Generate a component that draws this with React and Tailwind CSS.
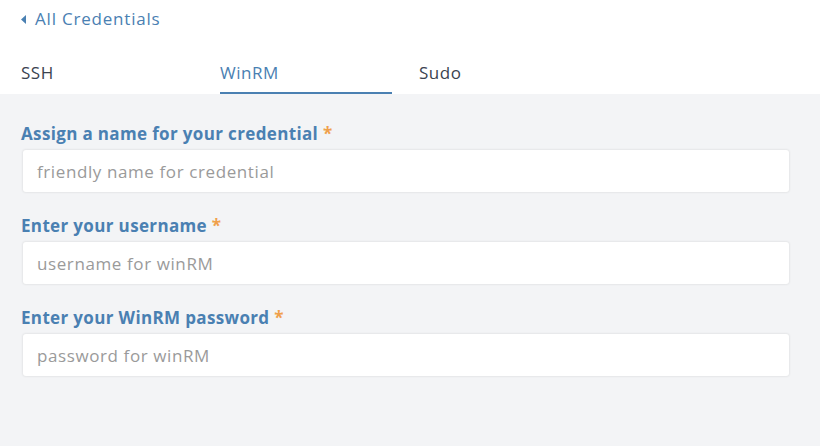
import React from "react";

function Field({ label, placeholder }) {
  return (
    <div className="flex flex-col">
      <div className="h-[27px] pl-[21px] text-[17px] font-bold leading-[22px] text-[#4a80b2] tracking-[0.35px]">
        {label} <span className="text-[#f0a04b]">*</span>
      </div>
      <div className="ml-[23px] mr-[31px] h-[42px] rounded-[3px] bg-white shadow-[0_0_2px_1px_rgba(0,0,0,0.06)] flex items-center pl-[14px] pt-[2px] text-[17px] text-[#9a9a9a] tracking-[0.6px]">
        {placeholder}
      </div>
    </div>
  );
}

export default function App() {
  return (
    <div className="w-[820px] h-[446px] flex flex-col bg-[#f3f4f6]" style={{ fontFamily: "'Open Sans', sans-serif" }}>
      <div className="bg-white h-[94px] flex flex-col">
        <div className="flex items-center h-[38px] pl-[21px] text-[#4a80b2] text-[17px] tracking-[0.8px]">
          <svg width="6" height="9" viewBox="0 0 6 9" className="mr-[8px]">
            <path d="M5 0 L0 4.5 L5 9 Z" fill="#4a80b2" />
          </svg>
          All Credentials
        </div>
        <div className="flex mt-[25px] pl-[21px] gap-[27px] text-[17px] leading-[20px] tracking-[0.5px]">
          <div className="w-[172px] h-[31px] text-[#3b4350]">SSH</div>
          <div className="w-[172px] h-[31px] text-[#4a80b2] border-b-2 border-[#4a80b2]">WinRM</div>
          <div className="w-[172px] h-[31px] text-[#3b4350]">Sudo</div>
        </div>
      </div>
      <div className="flex flex-col pt-[29px] gap-[23px]">
        <Field label="Assign a name for your credential" placeholder="friendly name for credential" />
        <Field label="Enter your username" placeholder="username for winRM" />
        <Field label="Enter your WinRM password" placeholder="password for winRM" />
      </div>
    </div>
  );
}
